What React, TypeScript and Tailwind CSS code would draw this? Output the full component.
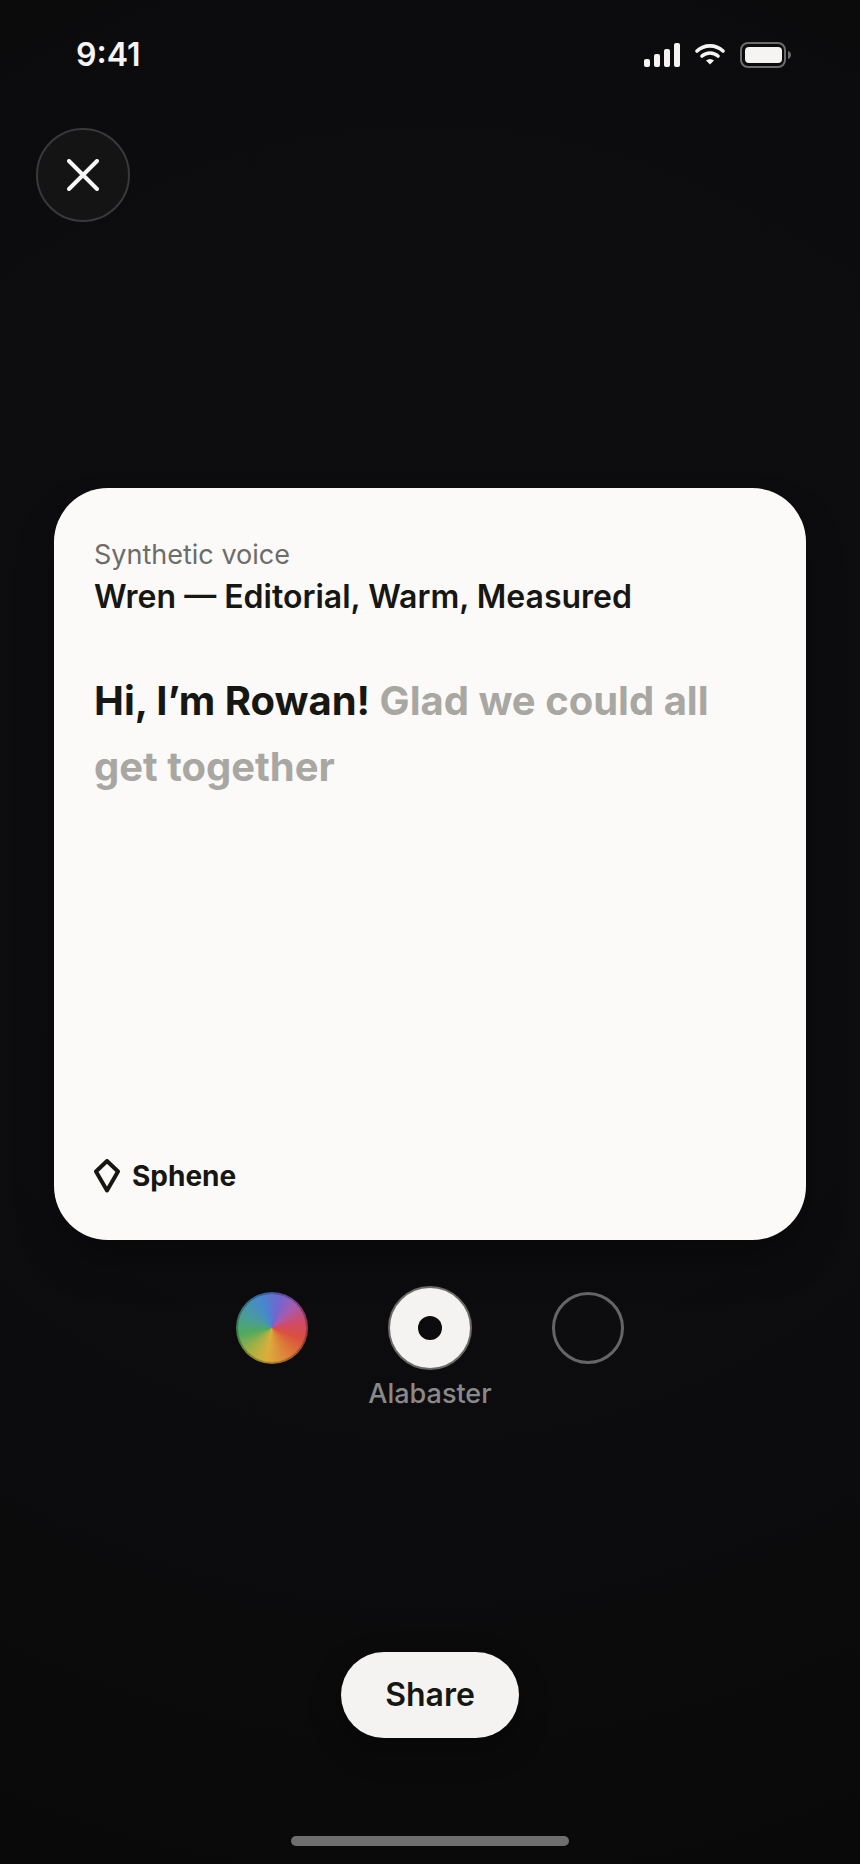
import { useState } from "react"
import clsx from "clsx"

const swatches = [
  {
    id: "prism",
    name: "Prism",
    fill: "border-2 border-black/25 bg-origin-border bg-[conic-gradient(from_15deg,#7266cf,#a55cae_30deg,#cf4a6c_60deg,#d9503f_95deg,#dc7a38_130deg,#dcae3c_175deg,#a5b044_210deg,#4fa95f_245deg,#4a9c9a_280deg,#4688cf_325deg,#7266cf)]",
  },
  { id: "alabaster", name: "Alabaster", fill: "border-2 border-[#6b6a68] bg-[#f4f3f1]" },
  { id: "onyx", name: "Onyx", fill: "border-3 border-[#656567] bg-[#0d0d0f]" },
]

function StatusBar() {
  return (
    <div className="flex h-22 items-center justify-between pt-[22px] pr-17 pl-19 text-[#f5f4f2]">
      <span className="text-[32px] leading-9 font-semibold">9:41</span>
      <div className="flex items-center gap-[15px]">
        <svg width="36" height="24" viewBox="0 0 36 24" fill="currentColor">
          <rect x="0" y="16" width="6" height="8" rx="2" />
          <rect x="10" y="11" width="6" height="13" rx="2" />
          <rect x="20" y="6" width="6" height="18" rx="2" />
          <rect x="30" y="0" width="6" height="24" rx="2" />
        </svg>
        <svg width="30" height="24" viewBox="0 0 30 24" fill="none" stroke="currentColor" strokeWidth="3.6">
          <path d="M2 8a19 19 0 0 1 26 0" strokeLinecap="round" />
          <path d="M7 13a12 12 0 0 1 16 0" strokeLinecap="round" />
          <path d="M15 21.5l-4-4a6.5 6.5 0 0 1 8 0z" fill="currentColor" stroke="none" />
        </svg>
        <svg width="52" height="26" viewBox="0 0 52 26" fill="none">
          <rect x="1" y="1" width="44" height="24" rx="7" stroke="#6c6c6d" strokeWidth="2" />
          <rect x="5" y="5" width="37" height="16" rx="4" fill="currentColor" />
          <path d="M48 9c4 1 4 7 0 8z" fill="#6c6c6d" />
        </svg>
      </div>
    </div>
  )
}

export default function App() {
  const [selected, setSelected] = useState("alabaster")
  const current = swatches.find((s) => s.id === selected)

  return (
    <div className="flex min-h-screen flex-col bg-[#0a0a0a] bg-[radial-gradient(circle_at_50%_42%,#0d0d0f,#0c0c0e_60%,#090909)] font-[Inter,sans-serif]">
      <StatusBar />

      <button
        type="button"
        aria-label="Close"
        className="mt-10 ml-9 flex size-[94px] items-center justify-center rounded-full border-2 border-[#39393b] bg-[#141415] text-[#f8f7f5]"
      >
        <svg width="32" height="32" viewBox="0 0 32 32" fill="none" stroke="currentColor" strokeWidth="4" strokeLinecap="round">
          <path d="M2 2l28 28M30 2L2 30" />
        </svg>
      </button>

      <main className="mt-[266px] flex flex-col items-center px-[54px]">
        <article className="flex aspect-square w-full flex-col rounded-[54px] bg-[#fbfaf8] px-10 pt-[51px] pb-11 text-[#161612] shadow-[0_24px_48px_-12px_rgba(0,0,0,0.4)]">
          <p className="text-[27px] leading-8 text-[#6c6c69]">Synthetic voice</p>
          <h1 className="mt-1.5 text-[32px] leading-10 font-semibold">Wren — Editorial, Warm, Measured</h1>
          <p className="mt-[51px] text-[40px] leading-[66px] font-bold">
            Hi, I’m Rowan! <span className="text-[#a8a7a2]">Glad we could all get together</span>
          </p>
          <div className="mt-auto flex items-center gap-3">
            <svg width="26" height="34" viewBox="0 0 26 34" fill="none" stroke="currentColor" strokeWidth="4" strokeLinejoin="round">
              <path d="M13 2L24 12.5 13 31.5 2 12.5z" />
            </svg>
            <span className="text-[28px] leading-10 font-bold">Sphene</span>
          </div>
        </article>

        <div role="radiogroup" aria-label="Card colour" className="mt-[46px] flex h-[84px] items-center gap-20">
          {swatches.map((s) => (
            <label key={s.id} className="relative flex items-center justify-center">
              <input
                type="radio"
                name="swatch"
                aria-label={s.name}
                checked={selected === s.id}
                onChange={() => setSelected(s.id)}
                className={clsx("appearance-none rounded-full", s.fill, selected === s.id ? "size-[84px]" : "size-18")}
              />
              {selected === s.id && <span className="absolute size-6 rounded-full bg-[#0c0c0e]" />}
            </label>
          ))}
        </div>
        <p className="mt-1.5 text-[27px] leading-9 font-medium text-[#8a8988]">{current?.name}</p>
      </main>

      <footer className="mt-auto flex flex-col items-center pb-[18px]">
        <button
          type="button"
          className="h-[86px] rounded-full bg-[#f4f3f1] px-11 text-[32px] leading-10 font-semibold text-[#161612] shadow-[0_12px_32px_rgba(0,0,0,0.3)]"
        >
          Share
        </button>
        <div className="mt-[98px] h-[10px] w-[278px] rounded-full bg-[#6f6f6f]" />
      </footer>
    </div>
  )
}
